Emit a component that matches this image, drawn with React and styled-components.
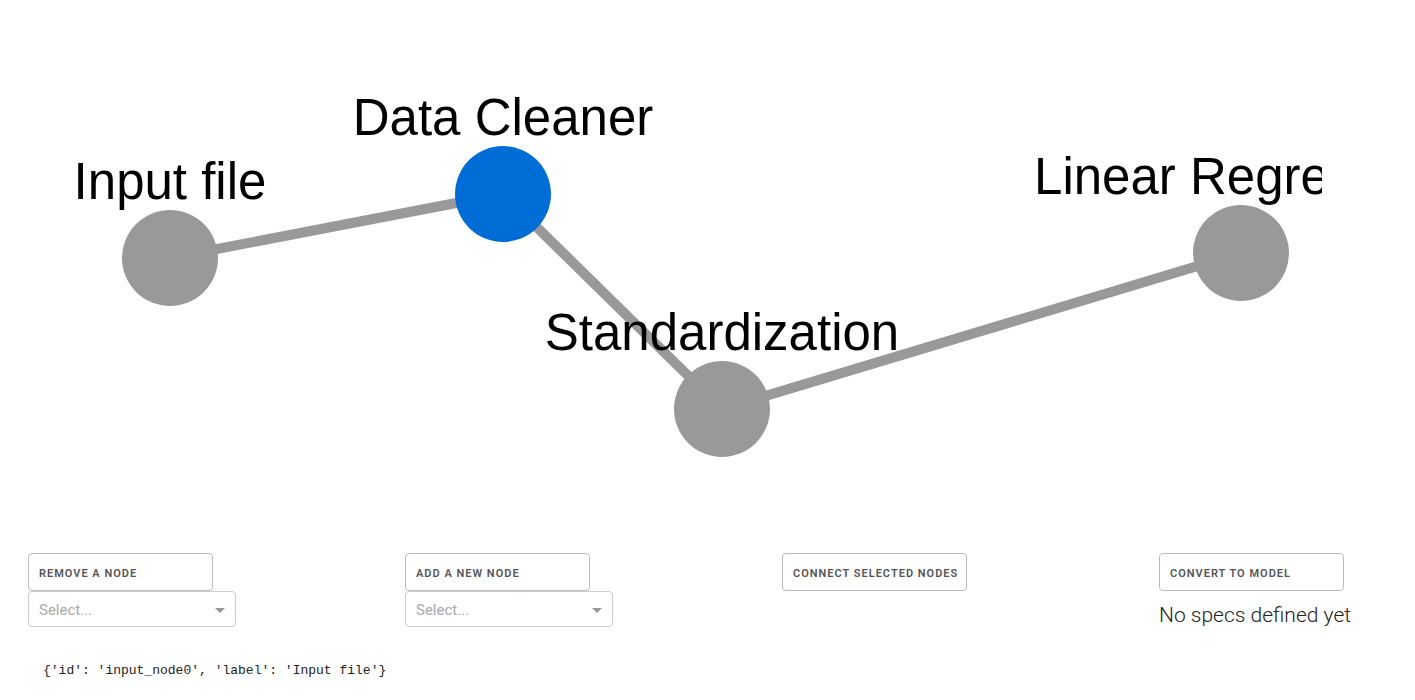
import React from "react";
import styled, { createGlobalStyle } from "styled-components";

const GlobalStyle = createGlobalStyle`
  *, *::before, *::after { box-sizing: border-box; }
  body {
    margin: 0;
    background: #fff;
    color: #222;
    font-family: Roboto, "Liberation Sans", sans-serif;
    font-size: 15px;
  }
`;

const Page = styled.main`
  padding: 0 28px;
`;

const Graph = styled.svg`
  display: block;
  width: calc(100% - 65px);
  height: 553px;
  overflow: hidden;
`;

const Edge = styled.line`
  stroke: #999;
  stroke-width: 10px;
`;

const NodeShape = styled.circle`
  fill: ${({ $selected }) => ($selected ? "#006dd6" : "#999")};
`;

const NodeLabel = styled.text`
  fill: #000;
  font-family: "Liberation Sans", Arial, sans-serif;
  font-size: 51px;
  text-anchor: middle;
`;

const Controls = styled.section`
  display: grid;
  grid-template-columns: repeat(4, minmax(0, 1fr));
  column-gap: 149px;
`;

const Control = styled.div`
  display: flex;
  flex-direction: column;
  align-items: flex-start;
`;

const ActionButton = styled.button`
  width: 185px;
  height: 38px;
  padding: 2px 0 0 10px;
  border: 1px solid #bbb;
  border-radius: 4px;
  background: transparent;
  color: #555;
  font-family: inherit;
  font-size: 11px;
  font-weight: 600;
  letter-spacing: 1px;
  text-align: left;
  text-transform: uppercase;
  white-space: nowrap;
  cursor: pointer;
`;

const SelectField = styled.div`
  position: relative;
  width: 208px;
`;

const SelectBox = styled.select`
  display: block;
  width: 100%;
  height: 36px;
  padding: 2px 24px 0 10px;
  border: 1px solid #ccc;
  border-radius: 4px;
  appearance: none;
  background: #fff;
  color: #aaa;
  font-family: inherit;
  font-size: 15px;
`;

const Caret = styled.svg`
  position: absolute;
  top: 17px;
  right: 11px;
  pointer-events: none;
`;

const SpecsMessage = styled.h5`
  margin: 10px 0 0;
  font-size: 21px;
  font-weight: 300;
  line-height: 28px;
  white-space: nowrap;
`;

const NodeData = styled.pre`
  margin: 34px 0 0;
  padding: 0 15px;
  font-family: "Liberation Mono", monospace;
  font-size: 13px;
  line-height: 15px;
`;

const nodes = {
  input: { label: "Input file", x: 142, y: 258 },
  cleaner: { label: "Data Cleaner", x: 475, y: 194, selected: true },
  standard: { label: "Standardization", x: 694, y: 409 },
  regression: { label: "Linear Regression", x: 1213, y: 253 },
};

const edges = [
  ["input", "cleaner"],
  ["cleaner", "standard"],
  ["standard", "regression"],
];

function NodeSelect({ label, options }) {
  return (
    <SelectField>
      <SelectBox aria-label={label} defaultValue="">
        <option value="">Select...</option>
        {options.map((option) => (
          <option key={option} value={option}>{option}</option>
        ))}
      </SelectBox>
      <Caret width="10" height="5" viewBox="0 0 10 5" aria-hidden="true">
        <path d="M0 0h10L5 5z" fill="#999" />
      </Caret>
    </SelectField>
  );
}

export default function App() {
  const labels = Object.values(nodes).map((node) => node.label);
  return (
    <>
      <GlobalStyle />
      <Page>
        <Graph role="img" aria-label="Pipeline graph">
          {edges.map(([from, to]) => (
            <Edge
              key={from}
              x1={nodes[from].x}
              y1={nodes[from].y}
              x2={nodes[to].x}
              y2={nodes[to].y}
            />
          ))}
          {Object.entries(nodes).map(([id, { label, x, y, selected }]) => (
            <g key={id}>
              <NodeShape cx={x} cy={y} r="48" $selected={selected} />
              <NodeLabel x={x} y={y - 59}>{label}</NodeLabel>
            </g>
          ))}
        </Graph>
        <Controls>
          <Control>
            <ActionButton type="button">Remove a node</ActionButton>
            <NodeSelect label="Node to remove" options={labels} />
          </Control>
          <Control>
            <ActionButton type="button">Add a new node</ActionButton>
            <NodeSelect label="Node to add" options={labels} />
          </Control>
          <Control>
            <ActionButton type="button">Connect selected nodes</ActionButton>
          </Control>
          <Control>
            <ActionButton type="button">Convert to model</ActionButton>
            <SpecsMessage>No specs defined yet</SpecsMessage>
          </Control>
        </Controls>
        <NodeData>{"{'id': 'input_node0', 'label': 'Input file'}"}</NodeData>
      </Page>
    </>
  );
}
